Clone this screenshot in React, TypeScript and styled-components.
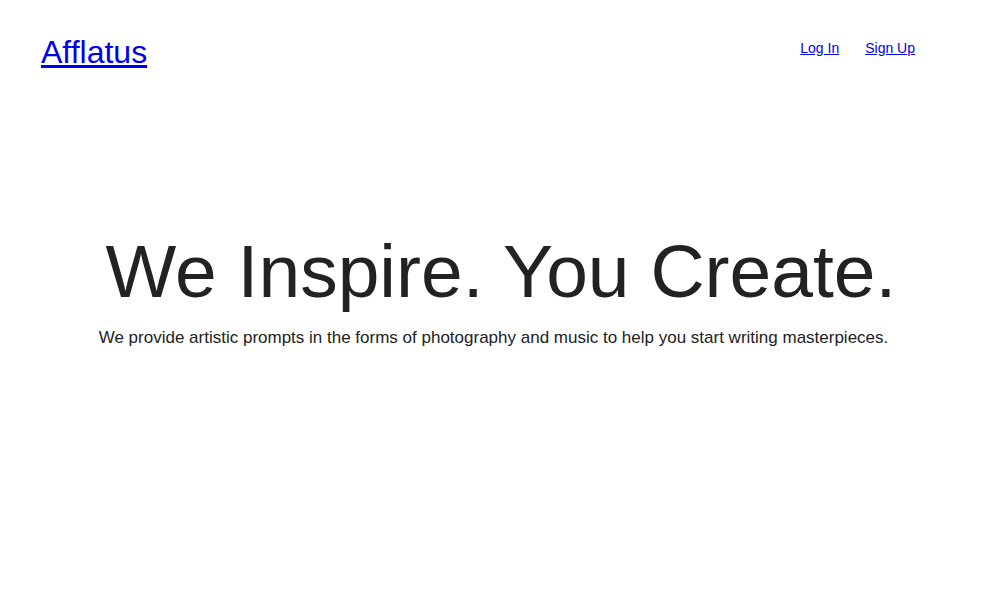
import React from 'react';
import styled, {createGlobalStyle} from 'styled-components';

const GlobalStyle = createGlobalStyle`
  body {
    margin: 0;
    background: #ffffff;
    font-family: "Liberation Sans", Arial, sans-serif;
  }
`;

const Header = styled.header`
  display: flex;
  justify-content: space-between;
  align-items: flex-start;
  padding: 34px 87px 0 41px;
`;

const Logo = styled.a`
  font-size: 32px;
  color: #0000ee;
  text-decoration: underline;
`;

const Nav = styled.nav`
  display: flex;
  gap: 26px;
  padding-top: 6px;
`;

const NavLink = styled.a`
  font-size: 14px;
  color: #0000ee;
  text-decoration: underline;
`;

const Hero = styled.section`
  display: flex;
  flex-direction: column;
  align-items: center;
  margin-top: 157px;
  color: #222222;
`;

const Title = styled.h1`
  margin: 0;
  font-size: 75px;
  font-weight: 400;
`;

const Tagline = styled.p`
  margin: 14px 0 0;
  font-size: 17px;
  padding-right: 15px;
`;

function App() {
    return (
        <>
            <GlobalStyle/>
            <Header>
                <Logo href="#">Afflatus</Logo>
                <Nav>
                    <NavLink href="#">Log In</NavLink>
                    <NavLink href="#">Sign Up</NavLink>
                </Nav>
            </Header>
            <Hero>
                <Title>We Inspire. You Create.</Title>
                <Tagline>
                    We provide artistic prompts in the forms of photography and music to help you start writing masterpieces.
                </Tagline>
            </Hero>
        </>
    );
}

export default App;
